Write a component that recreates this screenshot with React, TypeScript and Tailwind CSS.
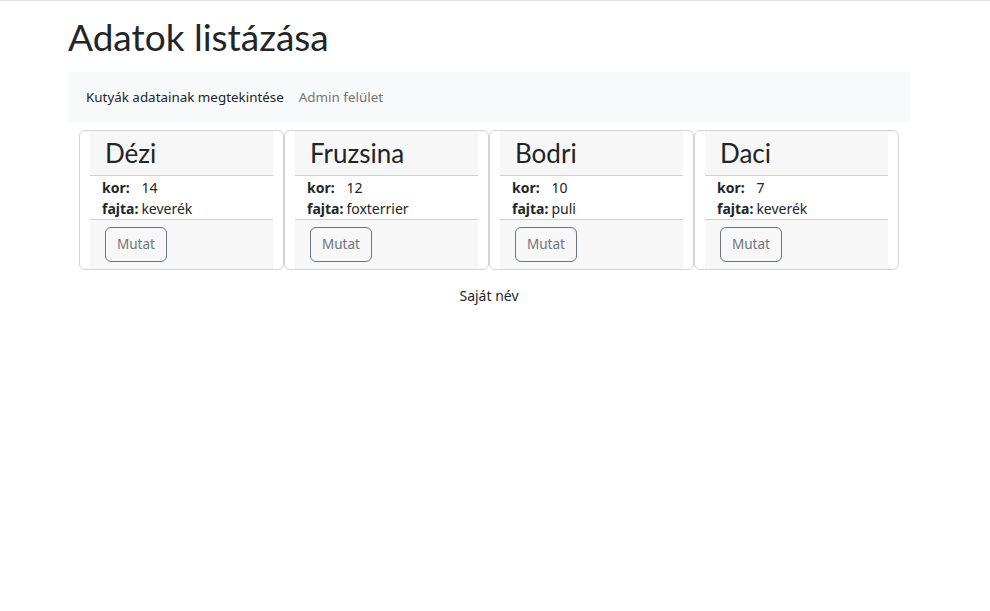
import React from 'react';

const dogs = [
  { name: 'Dézi', kor: 14, fajta: 'keverék' },
  { name: 'Fruzsina', kor: 12, fajta: 'foxterrier' },
  { name: 'Bodri', kor: 10, fajta: 'puli' },
  { name: 'Daci', kor: 7, fajta: 'keverék' },
];

function DogCard({ dog }: { dog: (typeof dogs)[number] }) {
  return (
    <div className="border border-[#d3d4d5] rounded-[6px] px-[10px]">
      <div className="h-[45px] bg-[#f7f7f7] border-b border-[#cfcfcf] flex items-center pl-[15px]">
        <h3 className="text-[26px] leading-none font-['Lato',sans-serif] pb-[1px]">{dog.name}</h3>
      </div>
      <div className="grid grid-cols-[auto_1fr] gap-x-[3px] pl-3 pt-[1px] text-[14px] leading-[21px]">
        <span className="font-bold">kor:</span>
        <span>{dog.kor}</span>
        <span className="font-bold">fajta:</span>
        <span>{dog.fajta}</span>
      </div>
      <div className="bg-[#f7f7f7] border-t border-[#cfcfcf] px-[15px] pt-[7px] pb-[7px]">
        <button className="h-[35px] border border-[#6c757d] rounded-[6px] text-[#6c757d] text-[13.5px] leading-[21px] px-[11px]">
          Mutat
        </button>
      </div>
    </div>
  );
}

export default function App() {
  return (
    <div className="min-h-screen bg-white text-[#212529] border-t border-[#dee2e6] font-['Noto_Sans',sans-serif]">
      <div className="ml-[68px] w-[842px]">
        <h1 className="text-[37px] leading-[48px] font-['Lato',sans-serif] pt-[12px] mb-[11px]">Adatok listázása</h1>
        <nav className="bg-[#f8f9fa] h-[50px] flex items-center gap-[15px] px-[18px] text-[13.4px] pt-[-1px]">
          <a className="text-[#212529]">Kutyák adatainak megtekintése</a>
          <a className="text-[#737577]">Admin felület</a>
        </nav>
        <div className="grid grid-cols-4 px-[11px] mt-[8px]">
          {dogs.map((d) => (
            <DogCard key={d.name} dog={d} />
          ))}
        </div>
        <p className="text-center text-[14px] leading-[21px] mt-[15px]">Saját név</p>
      </div>
    </div>
  );
}
